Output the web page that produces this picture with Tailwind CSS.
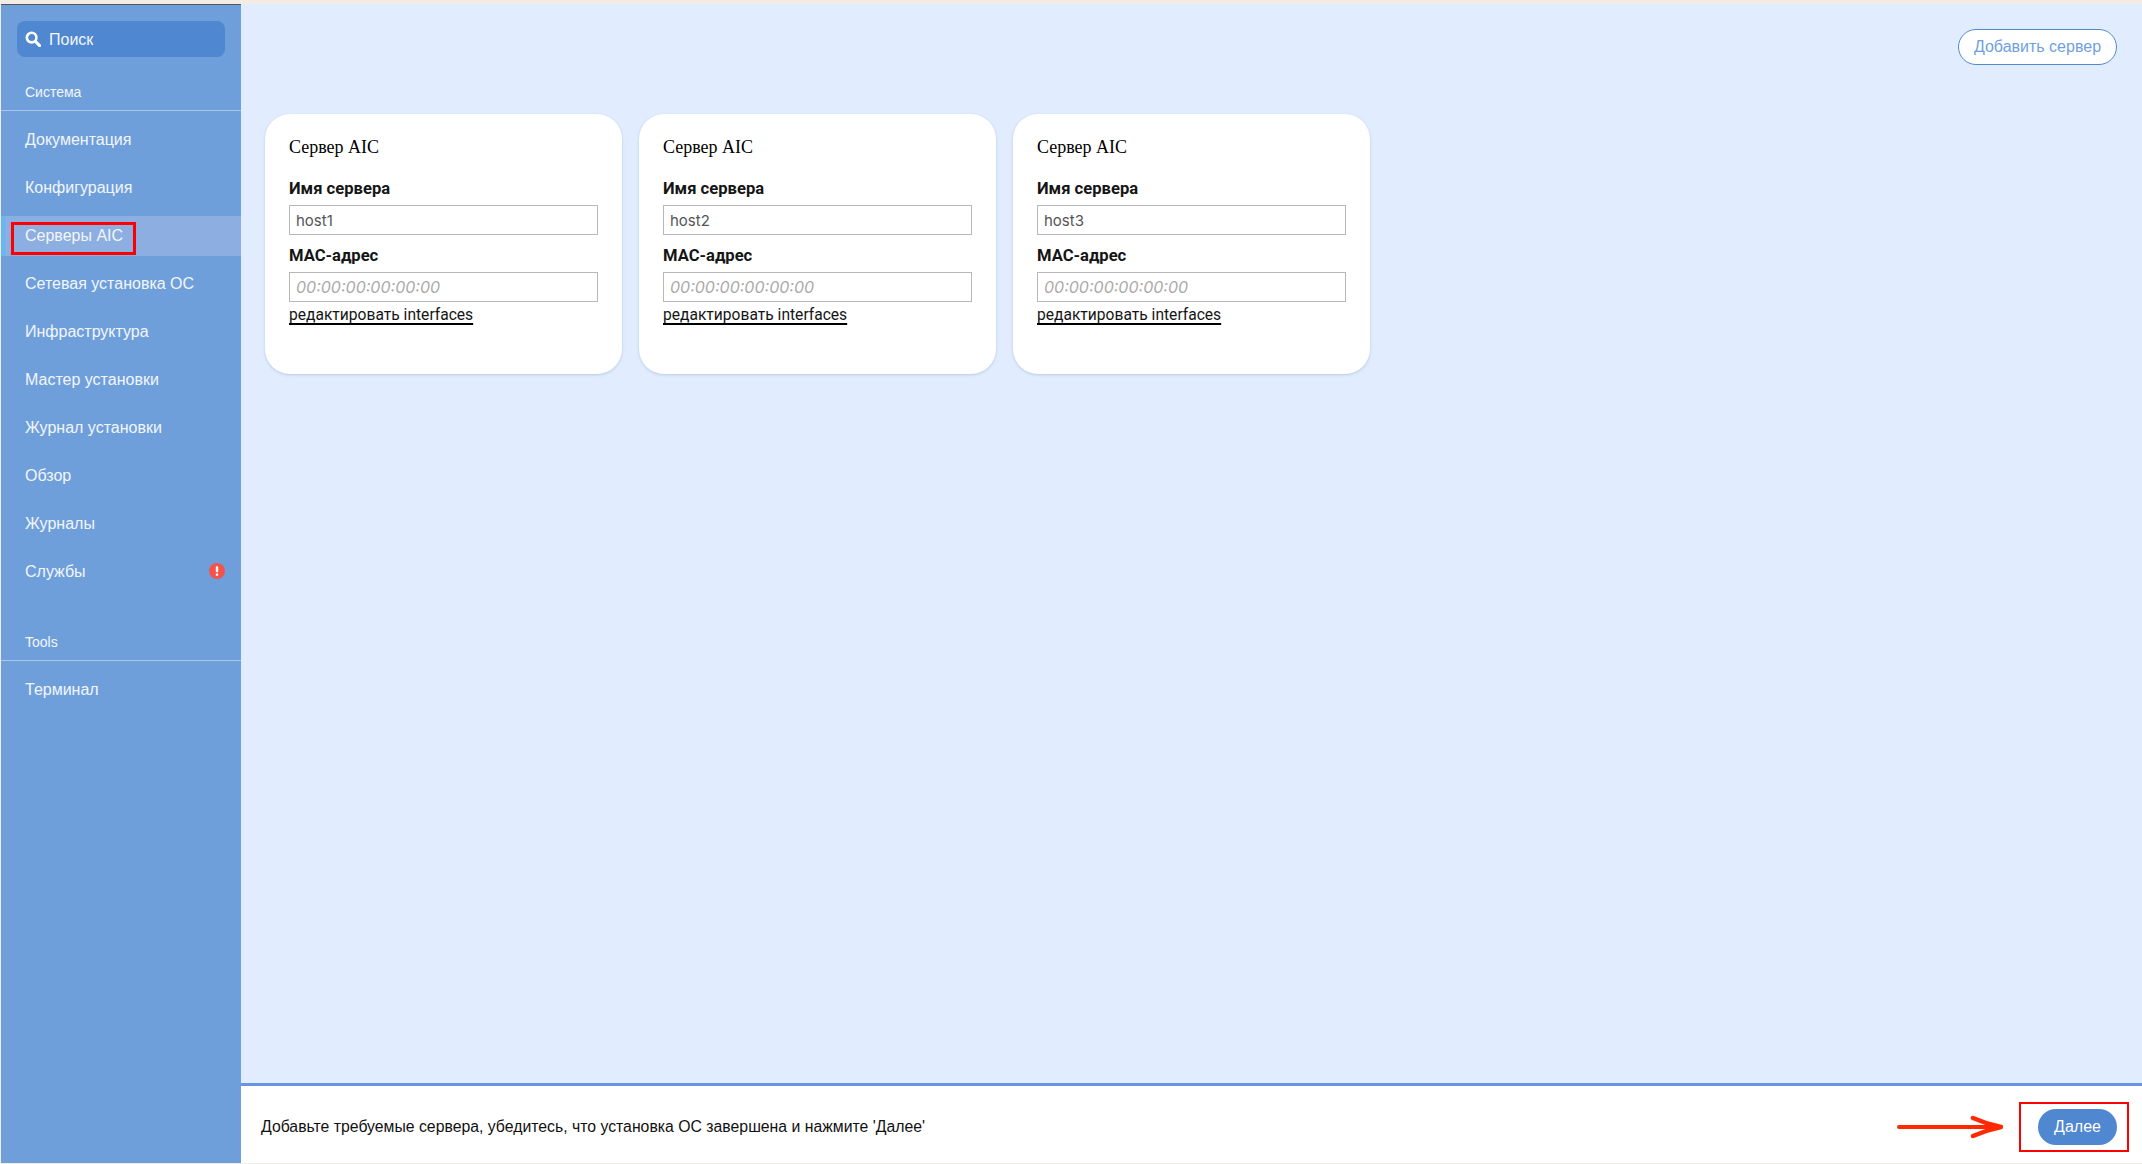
<!DOCTYPE html>
<html lang="en">
<head>
    <meta charset="UTF-8">
    <title>Серверы AIC</title>
    <script src="https://cdn.jsdelivr.net/npm/@tailwindcss/browser@4"></script>
</head>
<body class="bg-[#f3ece4] font-['Liberation_Sans',sans-serif] overflow-hidden">
    <div class="h-[1164px] pt-[4px] pb-[1px] flex">
        <!-- sidebar -->
        <aside class="w-[240px] ml-[1px] shrink-0 bg-[#6f9fdb] border-t border-[#555] text-[#f2f6fc] text-[16px]">
            <div class="mx-4 mt-4 h-9 rounded-lg bg-[#4f87d0] flex items-center pl-2 gap-2">
                <svg class="w-4 h-4" viewBox="0 0 16 16" fill="none" stroke="#fff"><circle cx="6.6" cy="6.6" r="4.8" stroke-width="2.6"/><path d="M10.4 10.4L14.6 14.6" stroke-width="3" stroke-linecap="round"/></svg>
                <span class="pt-[1px]">Поиск</span>
            </div>
            <div class="mt-[26px] pl-6 pb-[8px] text-[14px] leading-[19px] border-b border-[#a9c5ea]">Система</div>
            <nav class="pt-[9px]">
                <a class="flex items-center h-10 mb-2 pl-6">Документация</a>
                <a class="flex items-center h-10 mb-2 pl-6">Конфигурация</a>
                <a class="relative flex items-center h-10 mb-2 pl-6 bg-[#8daee0] border-l-[4px] border-[#66b8f5]">
                    <span class="-ml-[4px]">Серверы AIC</span>
                    <span class="absolute left-[6px] top-[6px] w-[125px] h-[33px] border-[3px] border-[#f00]"></span>
                </a>
                <a class="flex items-center h-10 mb-2 pl-6">Сетевая установка ОС</a>
                <a class="flex items-center h-10 mb-2 pl-6">Инфраструктура</a>
                <a class="flex items-center h-10 mb-2 pl-6">Мастер установки</a>
                <a class="flex items-center h-10 mb-2 pl-6">Журнал установки</a>
                <a class="flex items-center h-10 mb-2 pl-6">Обзор</a>
                <a class="flex items-center h-10 mb-2 pl-6">Журналы</a>
                <a class="flex items-center justify-between h-10 pl-6 pr-4">
                    <span>Службы</span>
                    <svg class="w-4 h-4 -mt-[2px]" viewBox="0 0 16 16"><circle cx="8" cy="8" r="8" fill="#f4534a"/><rect x="6.8" y="3.2" width="2.4" height="6" rx="0.8" fill="#fff"/><rect x="6.8" y="10.4" width="2.4" height="2.4" rx="0.6" fill="#fff"/></svg>
                </a>
            </nav>
            <div class="mt-[41px] pl-6 pb-[8px] text-[14px] leading-[19px] border-b border-[#a9c5ea]">Tools</div>
            <a class="flex items-center h-10 mt-[9px] pl-6">Терминал</a>
        </aside>

        <!-- main -->
        <div class="flex-1 flex flex-col min-w-0">
            <main class="flex-1 bg-[#e1edfe] pt-[25px] pl-6 pr-[25px]">
                <div class="flex justify-end">
                    <button class="h-[36px] w-[159px] rounded-full bg-white border border-[#4f87d0] text-[#6f9fe0] text-[16px]">Добавить сервер</button>
                </div>
                <div class="flex gap-[17px] mt-[49px]">
                    <div class="w-[357px] h-[260px] rounded-[25px] bg-white shadow-[0_1px_3px_rgba(90,120,170,0.3)] px-6 pt-[22px]">
                        <h3 class="font-['Liberation_Serif',serif] text-[18px] leading-[22px] text-black">Сервер AIC</h3>
                        <label class="block mt-[20px] font-['Roboto',sans-serif] font-bold text-[16.6px] leading-[22px] text-[#151515]">Имя сервера</label>
                        <input class="block mt-[5px] w-[309px] h-[30px] border-[1.5px] border-[#b8b8b8] px-[6px] font-['Inter',sans-serif] text-[15px] text-[#555] outline-none" value="host1">
                        <label class="block mt-[10px] font-['Roboto',sans-serif] font-bold text-[16.6px] leading-[22px] text-[#151515]">MAC-адрес</label>
                        <input class="block mt-[5px] w-[309px] h-[30px] border-[1.5px] border-[#b8b8b8] px-[6px] font-['Inter',sans-serif] italic text-[16px] placeholder:text-[#aaa] outline-none" placeholder="00:00:00:00:00:00">
                        <a class="block mt-[2px] font-['Roboto',sans-serif] text-[15.6px] leading-[22px] text-[#151515] underline decoration-black decoration-2 underline-offset-[3px]">редактировать interfaces</a>
                    </div>
                    <div class="w-[357px] h-[260px] rounded-[25px] bg-white shadow-[0_1px_3px_rgba(90,120,170,0.3)] px-6 pt-[22px]">
                        <h3 class="font-['Liberation_Serif',serif] text-[18px] leading-[22px] text-black">Сервер AIC</h3>
                        <label class="block mt-[20px] font-['Roboto',sans-serif] font-bold text-[16.6px] leading-[22px] text-[#151515]">Имя сервера</label>
                        <input class="block mt-[5px] w-[309px] h-[30px] border-[1.5px] border-[#b8b8b8] px-[6px] font-['Inter',sans-serif] text-[15px] text-[#555] outline-none" value="host2">
                        <label class="block mt-[10px] font-['Roboto',sans-serif] font-bold text-[16.6px] leading-[22px] text-[#151515]">MAC-адрес</label>
                        <input class="block mt-[5px] w-[309px] h-[30px] border-[1.5px] border-[#b8b8b8] px-[6px] font-['Inter',sans-serif] italic text-[16px] placeholder:text-[#aaa] outline-none" placeholder="00:00:00:00:00:00">
                        <a class="block mt-[2px] font-['Roboto',sans-serif] text-[15.6px] leading-[22px] text-[#151515] underline decoration-black decoration-2 underline-offset-[3px]">редактировать interfaces</a>
                    </div>
                    <div class="w-[357px] h-[260px] rounded-[25px] bg-white shadow-[0_1px_3px_rgba(90,120,170,0.3)] px-6 pt-[22px]">
                        <h3 class="font-['Liberation_Serif',serif] text-[18px] leading-[22px] text-black">Сервер AIC</h3>
                        <label class="block mt-[20px] font-['Roboto',sans-serif] font-bold text-[16.6px] leading-[22px] text-[#151515]">Имя сервера</label>
                        <input class="block mt-[5px] w-[309px] h-[30px] border-[1.5px] border-[#b8b8b8] px-[6px] font-['Inter',sans-serif] text-[15px] text-[#555] outline-none" value="host3">
                        <label class="block mt-[10px] font-['Roboto',sans-serif] font-bold text-[16.6px] leading-[22px] text-[#151515]">MAC-адрес</label>
                        <input class="block mt-[5px] w-[309px] h-[30px] border-[1.5px] border-[#b8b8b8] px-[6px] font-['Inter',sans-serif] italic text-[16px] placeholder:text-[#aaa] outline-none" placeholder="00:00:00:00:00:00">
                        <a class="block mt-[2px] font-['Roboto',sans-serif] text-[15.6px] leading-[22px] text-[#151515] underline decoration-black decoration-2 underline-offset-[3px]">редактировать interfaces</a>
                    </div>
                </div>
            </main>

            <!-- footer -->
            <footer class="h-[80px] shrink-0 bg-white border-t-[3px] border-[#6596e6] flex items-center justify-between pt-[5px] pl-[20px] pr-[25px] relative">
                <span class="text-[15.8px] text-[#111]">Добавьте требуемые сервера, убедитесь, что установка ОС завершена и нажмите 'Далее'</span>
                <div class="flex items-center">
                    <svg class="w-[106px] h-[24px] mr-[35px]" viewBox="0 0 106 24" fill="none"><path d="M2 12H102" stroke="#ff2a00" stroke-width="4" stroke-linecap="round"/><path d="M76 3C85 7 94 10 104 12C94 14 85 17 76 21" stroke="#ff2a00" stroke-width="4.5" stroke-linecap="round" stroke-linejoin="round"/></svg>
                    <button class="relative h-[36px] w-[79px] rounded-full bg-[#4f87d0] text-white text-[16px]">Далее
                        <span class="absolute -left-[19px] -top-[7px] w-[110px] h-[50px] border-[2px] border-[#f00]"></span>
                    </button>
                </div>
            </footer>
        </div>
    </div>
</body>
</html>
